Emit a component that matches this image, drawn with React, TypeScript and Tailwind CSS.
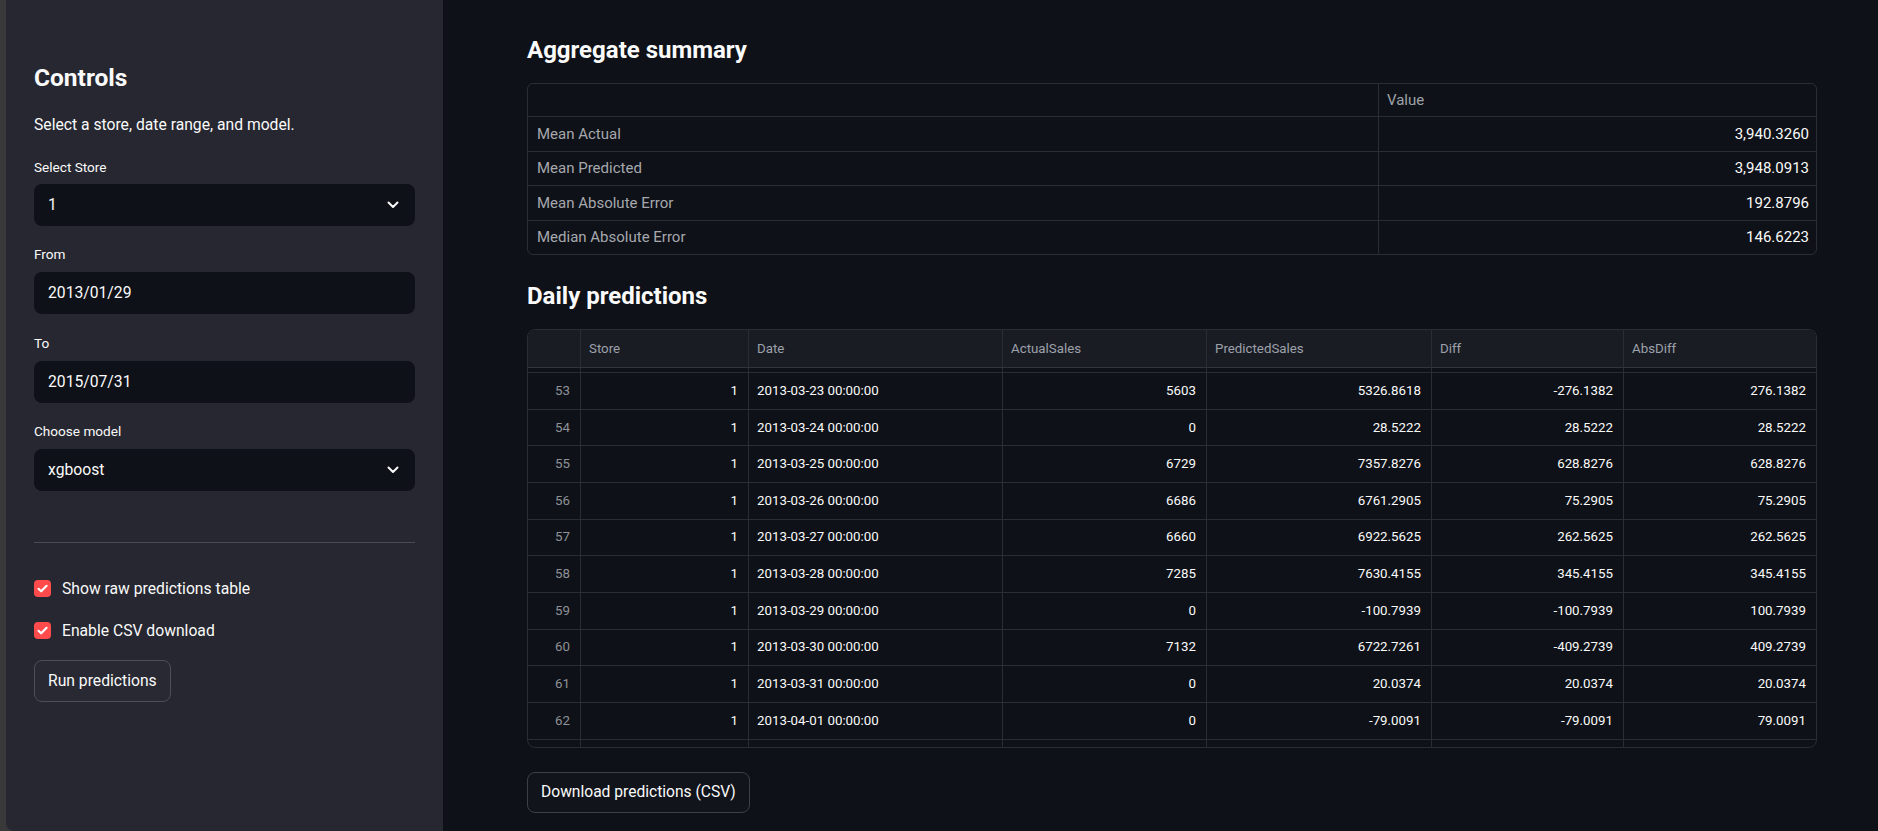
import React from 'react';

type Row = {
  idx: number;
  date: string;
  actual: string;
  predicted: string;
  diff: string;
  abs: string;
};

const rows: Row[] = [
  { idx: 53, date: '2013-03-23 00:00:00', actual: '5603', predicted: '5326.8618', diff: '-276.1382', abs: '276.1382' },
  { idx: 54, date: '2013-03-24 00:00:00', actual: '0', predicted: '28.5222', diff: '28.5222', abs: '28.5222' },
  { idx: 55, date: '2013-03-25 00:00:00', actual: '6729', predicted: '7357.8276', diff: '628.8276', abs: '628.8276' },
  { idx: 56, date: '2013-03-26 00:00:00', actual: '6686', predicted: '6761.2905', diff: '75.2905', abs: '75.2905' },
  { idx: 57, date: '2013-03-27 00:00:00', actual: '6660', predicted: '6922.5625', diff: '262.5625', abs: '262.5625' },
  { idx: 58, date: '2013-03-28 00:00:00', actual: '7285', predicted: '7630.4155', diff: '345.4155', abs: '345.4155' },
  { idx: 59, date: '2013-03-29 00:00:00', actual: '0', predicted: '-100.7939', diff: '-100.7939', abs: '100.7939' },
  { idx: 60, date: '2013-03-30 00:00:00', actual: '7132', predicted: '6722.7261', diff: '-409.2739', abs: '409.2739' },
  { idx: 61, date: '2013-03-31 00:00:00', actual: '0', predicted: '20.0374', diff: '20.0374', abs: '20.0374' },
  { idx: 62, date: '2013-04-01 00:00:00', actual: '0', predicted: '-79.0091', diff: '-79.0091', abs: '79.0091' },
];

const summary = [
  ['Mean Actual', '3,940.3260'],
  ['Mean Predicted', '3,948.0913'],
  ['Mean Absolute Error', '192.8796'],
  ['Median Absolute Error', '146.6223'],
];

const gridCols = 'grid grid-cols-[53px_168px_254px_204px_225px_192px_1fr]';

const Chevron = () => (
  <svg width="12" height="8" viewBox="0 0 12 8" fill="none">
    <path d="M1.5 1.5 6 6l4.5-4.5" stroke="#fafafa" strokeWidth="2" strokeLinecap="round" strokeLinejoin="round" />
  </svg>
);

const Check = () => (
  <div className="flex h-[17px] w-[17px] items-center justify-center rounded-[4px] bg-[#ff4b4b]">
    <svg width="13" height="13" viewBox="0 0 13 13" fill="none">
      <path d="M2.5 6.8 5.2 9.3 10.6 3.8" stroke="#ffffff" strokeWidth="2.2" strokeLinecap="round" strokeLinejoin="round" />
    </svg>
  </div>
);

const Label = ({ text, className }: { text: string; className: string }) => (
  <div className={`h-[20px] text-[13.6px] leading-[20px] text-[#fafafa] ${className}`}>{text}</div>
);

const Field = ({ value, select, className }: { value: string; select?: boolean; className: string }) => (
  <div
    className={`flex h-[42px] items-center justify-between rounded-lg bg-[#0e1117] pl-[14px] pr-[16px] text-[15.7px] text-[#fafafa] ${className}`}
  >
    <span>{value}</span>
    {select && <Chevron />}
  </div>
);

const Sidebar = () => (
  <aside className="flex h-full w-[437px] shrink-0 flex-col rounded-bl-lg bg-[#262730] px-[28px] pt-[62px]">
    <h2 className="h-[32px] text-[24.5px] font-bold leading-[32px] text-[#fafafa]">Controls</h2>
    <p className="mt-[18.5px] h-[24px] text-[15.7px] leading-[24px] text-[#fafafa]">Select a store, date range, and model.</p>
    <Label text="Select Store" className="mt-[20px]" />
    <Field value="1" select className="mt-[7.5px]" />
    <Label text="From" className="mt-[18px]" />
    <Field value="2013/01/29" className="mt-[8px]" />
    <Label text="To" className="mt-[19px]" />
    <Field value="2015/07/31" className="mt-[8px]" />
    <Label text="Choose model" className="mt-[18px]" />
    <Field value="xgboost" select className="mt-[8px]" />
    <div className="mt-[51px] h-px bg-[#4a4b54]" />
    <div className="mt-[37px] flex h-[17px] items-center gap-[11px]">
      <Check />
      <span className="text-[15.7px] text-[#fafafa]">Show raw predictions table</span>
    </div>
    <div className="mt-[25px] flex h-[17px] items-center gap-[11px]">
      <Check />
      <span className="text-[15.7px] text-[#fafafa]">Enable CSV download</span>
    </div>
    <div className="mt-[21px]">
      <button className="flex h-[42px] items-center rounded-lg border border-[#4d4e57] bg-[#282932] px-[13px] text-[15.7px] text-[#fafafa]">
        Run predictions
      </button>
    </div>
  </aside>
);

const SummaryTable = () => (
  <div className="mt-[15.5px] overflow-hidden rounded-md border border-[#2b2d34] text-[15px]">
    <div className="grid h-[33px] grid-cols-[851px_1fr] border-b border-[#2b2d34]">
      <div className="border-r border-[#2b2d34]" />
      <div className="flex items-center px-[8px] text-[#9fa2a9]">Value</div>
    </div>
    {summary.map(([label, value], i) => (
      <div
        key={label}
        className={`grid grid-cols-[851px_1fr] ${i < 3 ? 'h-[34.5px] border-b border-[#2b2d34]' : 'h-[33.5px]'}`}
      >
        <div className="flex items-center border-r border-[#2b2d34] px-[9px] text-[#a6a8ae]">{label}</div>
        <div className="flex items-center justify-end px-[7px] text-[#fafafa]">{value}</div>
      </div>
    ))}
  </div>
);

const headers = ['', 'Store', 'Date', 'ActualSales', 'PredictedSales', 'Diff', 'AbsDiff'];

const FillerRow = ({ h, last }: { h: string; last?: boolean }) => (
  <div className={`${gridCols} ${h} ${last ? '' : 'border-b border-[#2b2d34]'}`}>
    {headers.map((_, i) => (
      <div key={i} className={i < 6 ? 'border-r border-[#2b2d34]' : ''} />
    ))}
  </div>
);

const DataFrame = () => (
  <div className="mt-[15.2px] overflow-hidden rounded-lg border border-[#2b2d34] text-[13.3px]">
    <div className={`${gridCols} h-[38px] border-b border-[#33353d] bg-[#1a1c24]`}>
      {headers.map((h, i) => (
        <div key={i} className={`flex items-center px-[8px] text-[#9da1aa] ${i < 6 ? 'border-r border-[#2b2d34]' : ''}`}>
          {h}
        </div>
      ))}
    </div>
    <FillerRow h="h-[5px]" />
    {rows.map((r) => {
      const cells = [String(r.idx), '1', r.date, r.actual, r.predicted, r.diff, r.abs];
      return (
        <div key={r.idx} className={`${gridCols} h-[36.67px] border-b border-[#2b2d34]`}>
          {cells.map((c, i) => (
            <div
              key={i}
              className={`flex items-center ${i === 2 ? 'justify-start pl-[8px]' : 'justify-end pr-[10px]'} ${
                i === 0 ? 'text-[#8e9198]' : 'text-[#fafafa]'
              } ${i < 6 ? 'border-r border-[#2b2d34]' : ''}`}
            >
              {c}
            </div>
          ))}
        </div>
      );
    })}
    <FillerRow h="h-[7.3px]" last />
  </div>
);

export default function App() {
  return (
    <div className="flex h-[831px] w-full overflow-hidden bg-[#393939] font-['Roboto',sans-serif]">
      <div className="w-[6px] shrink-0" />
      <Sidebar />
      <main className="h-full flex-1 bg-[#0e1117] pl-[84px] pr-[61px] pt-[31.5px]">
        <h3 className="h-[36px] text-[24px] font-bold leading-[36px] text-[#fafafa]">Aggregate summary</h3>
        <SummaryTable />
        <h3 className="mt-[22.8px] h-[36px] text-[24px] font-bold leading-[36px] text-[#fafafa]">Daily predictions</h3>
        <DataFrame />
        <button className="mt-[24px] flex h-[41px] items-center rounded-lg border border-[#3e4047] bg-[#11141b] px-[13px] text-[15.6px] text-[#fafafa]">
          Download predictions (CSV)
        </button>
      </main>
    </div>
  );
}
